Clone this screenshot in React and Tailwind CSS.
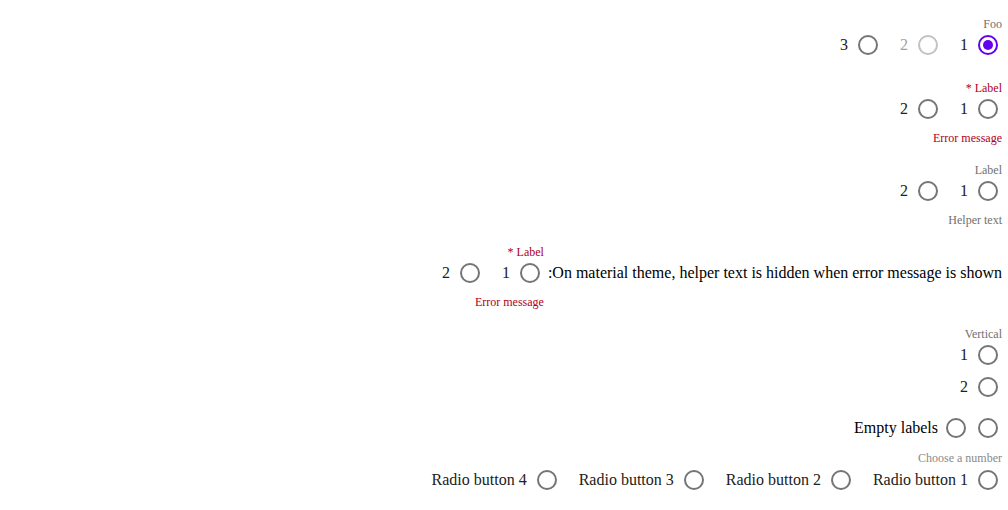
import React from 'react';

const Radio = ({ checked, disabled }) => {
  let ring = 'border-[#757575]';
  if (checked) ring = 'border-[#6200ee]';
  if (disabled) ring = 'border-[#c2c2c2]';
  return (
    <span className="w-7 h-7 flex items-center justify-center shrink-0">
      <span className={`w-5 h-5 rounded-full border-2 ${ring} flex items-center justify-center`}>
        {checked && <span className="w-2.5 h-2.5 rounded-full bg-[#6200ee]"></span>}
      </span>
    </span>
  );
};

const RadioItem = ({ label, checked, disabled }) => (
  <div className="flex items-center">
    <Radio checked={checked} disabled={disabled} />
    {label && (
      <span
        className={`ps-[6px] pe-[14px] text-base leading-5 ${disabled ? 'text-[#a3a3a3]' : 'text-[#212121]'}`}
      >
        {label}
      </span>
    )}
  </div>
);

const Group = ({ label, labelClass = 'text-[#707070]', helper, helperClass = 'text-[#707070]', children, className = '' }) => (
  <div className={`flex flex-col items-start ${className}`}>
    {label && <div className={`text-xs leading-[14px] h-[14px] ${labelClass}`}>{label}</div>}
    {children}
    {helper && <div className={`mt-2 text-xs leading-[14px] h-[14px] ${helperClass}`}>{helper}</div>}
  </div>
);

const Row = ({ children, className = '' }) => (
  <div className={`flex items-center gap-1 h-7 ${className}`}>{children}</div>
);

const App = () => {
  return (
    <div
      dir="rtl"
      className="w-full h-[510px] bg-white pt-[17px] pr-[6px] flex flex-col items-start overflow-hidden"
      style={{ fontFamily: '"Liberation Serif", "Times New Roman", serif' }}
    >
      <Group label="Foo">
        <Row>
          <RadioItem label="1" checked />
          <RadioItem label="2" disabled />
          <RadioItem label="3" />
        </Row>
      </Group>

      <Group className="mt-[22px]" label="Label *" labelClass="text-[#b00020]" helper="Error message" helperClass="text-[#b00020]">
        <Row>
          <RadioItem label="1" />
          <RadioItem label="2" />
        </Row>
      </Group>

      <Group className="mt-[18px]" label="Label" helper="Helper text">
        <Row>
          <RadioItem label="1" />
          <RadioItem label="2" />
        </Row>
      </Group>

      <div className="mt-[18px] flex items-start gap-[4px]">
        <span className="mt-[14px] text-base leading-7 text-black whitespace-nowrap">
          On material theme, helper text is hidden when error message is shown:
        </span>
        <Group label="Label *" labelClass="text-[#b00020]" helper="Error message" helperClass="text-[#b00020]">
          <Row>
            <RadioItem label="1" />
            <RadioItem label="2" />
          </Row>
        </Group>
      </div>

      <Group className="mt-[18px]" label="Vertical">
        <div className="flex flex-col items-start gap-1">
          <Row>
            <RadioItem label="1" />
          </Row>
          <Row>
            <RadioItem label="2" />
          </Row>
        </div>
      </Group>

      <Row className="mt-[13px]">
        <Radio />
        <Radio />
        <span className="text-base leading-5 text-black">Empty labels</span>
      </Row>

      <Group className="mt-[9px]" label="Choose a number" labelClass="text-[#8a8a8a]">
        <Row className="mt-px">
          <RadioItem label="Radio button 1" />
          <RadioItem label="Radio button 2" />
          <RadioItem label="Radio button 3" />
          <RadioItem label="Radio button 4" />
        </Row>
      </Group>
    </div>
  );
};

export default App;
